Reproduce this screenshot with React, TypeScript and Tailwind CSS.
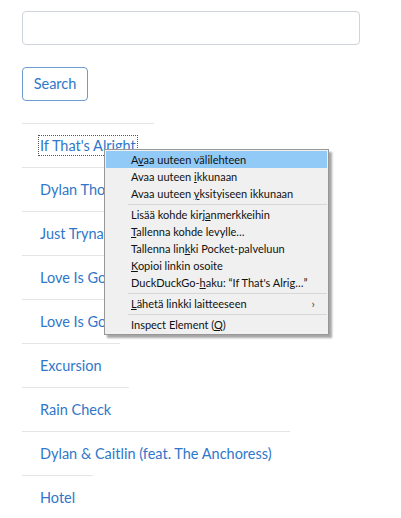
import React from 'react';

const songs = [
  "If That's Alright",
  'Dylan Thomas',
  'Just Tryna Make Sense',
  'Love Is Gone',
  'Love Is Gone',
  'Excursion',
  'Rain Check',
  'Dylan & Caitlin (feat. The Anchoress)',
  'Hotel',
];

const K = ({ children }: { children: React.ReactNode }) => <span className="underline underline-offset-1">{children}</span>;

const menuGroups: React.ReactNode[][] = [
  [
    <>A<K>v</K>aa uuteen välilehteen</>,
    <>Avaa uuteen <K>i</K>kkunaan</>,
    <>Avaa uuteen <K>y</K>ksityiseen ikkunaan</>,
  ],
  [
    <>Lisää kohde kirj<K>a</K>nmerkkeihin</>,
    <><K>T</K>allenna kohde levylle…</>,
    <>Tallenna lin<K>k</K>ki Pocket-palveluun</>,
    <><K>K</K>opioi linkin osoite</>,
    <>DuckDuckGo-<K>h</K>aku: “If That's Alrig…”</>,
  ],
  [<><K>L</K>ähetä linkki laitteeseen</>],
  [<>Inspect Element (<K>Q</K>)</>],
];

const App = () => {
  return (
    <div className="relative min-h-screen bg-white px-[22px] pt-[11px] text-[#3077c9]" style={{ fontFamily: 'Lato, "Noto Sans", sans-serif' }}>
      {/* search form */}
      <div className="w-[338px] h-[34px] rounded border border-[#ced4da] bg-white"></div>
      <button className="mt-[22px] h-[34px] w-[66px] rounded border border-[#6b9bd2] text-[14.5px] text-[#3077c9]">Search</button>

      {/* results */}
      <ul className="mt-[22px] flex flex-col items-start">
        {songs.map((song, i) => (
          <li key={i} className="whitespace-nowrap border-t border-[#e3e5e8] pl-[18px] pr-[18px] pt-[10px] pb-[9px] text-[14.5px] leading-6">
            <span className={i === 0 ? 'outline-1 outline-dotted outline-[#555] outline-offset-[1px]' : ''}>{song}</span>
          </li>
        ))}
      </ul>

      {/* context menu */}
      <div
        className="absolute left-[104px] top-[149px] w-[225px] whitespace-nowrap border border-[#979797] bg-[#f0f0f0] p-[1px] text-[11px] text-[#111] shadow-[3px_3px_2px_rgba(0,0,0,0.35)]"
      >
        {menuGroups.map((group, gi) => (
          <div key={gi}>
            {gi > 0 && (
              <div className="flex h-[4px] items-center pl-[22px]">
                <div className="h-px w-full bg-[#d7d7d7]"></div>
              </div>
            )}
            {group.map((item, ii) => (
              <div
                key={ii}
                className={`flex h-[17px] items-center justify-between pl-[25px] pr-[12px] ${gi === 0 && ii === 0 ? 'bg-[#91c9f7]' : ''}`}
              >
                <span className="leading-none">{item}</span>
                {gi === 2 && <span className="text-[12px] text-[#444]">›</span>}
              </div>
            ))}
          </div>
        ))}
      </div>
    </div>
  );
};

export default App;
